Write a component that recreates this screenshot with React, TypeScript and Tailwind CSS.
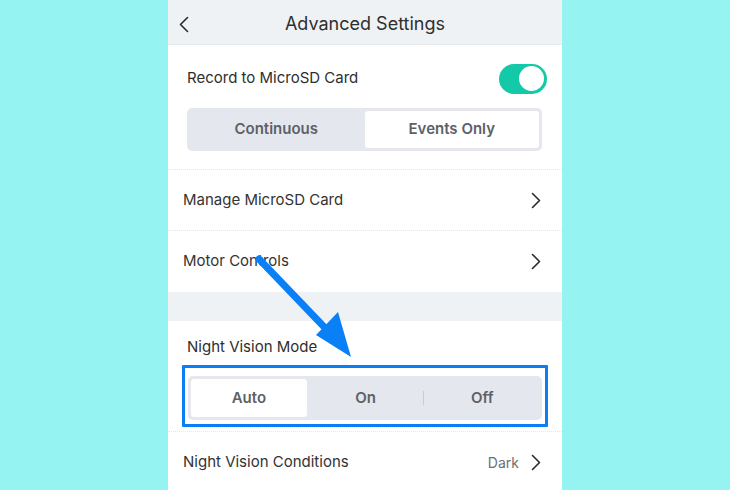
import type { ReactNode } from 'react'

const font = { fontFamily: 'Inter, "Noto Sans", sans-serif' }

// Тонкая стрелка-шеврон для строк списка
const Chevron = ({ dir = 'right' }: { dir?: 'left' | 'right' }) => (
  <svg width="10" height="17" viewBox="0 0 10 17" fill="none">
    <path
      d={dir === 'right' ? 'M1.5 1.5 L8.5 8.5 L1.5 15.5' : 'M8.5 1.5 L1.5 8.5 L8.5 15.5'}
      stroke="#2b2b2b"
      strokeWidth="1.6"
      strokeLinecap="round"
      strokeLinejoin="round"
    />
  </svg>
)

const NavRow = ({ label, value, last }: { label: string; value?: string; last?: boolean }) => (
  <div
    className={`flex h-[61px] shrink-0 items-center justify-between pl-[15px] pr-[21px] ${
      last ? '' : 'border-b border-dotted border-[#e3e7ea]'
    }`}
  >
    <span className="text-[15px] text-[#333]">{label}</span>
    <div className="flex items-center gap-[12px]">
      {value && <span className="text-[14px] text-[#6b6f73]">{value}</span>}
      <Chevron />
    </div>
  </div>
)

const Segment = ({ active, children }: { active?: boolean; children: ReactNode }) => (
  <div
    className={`flex flex-1 items-center justify-center text-[15px] font-semibold text-[#5d6166] ${
      active ? 'rounded-[4px] border border-[#e6e8ec] bg-white' : ''
    }`}
  >
    {children}
  </div>
)

export default function App() {
  return (
    <div className="relative flex h-[490px] w-[730px] justify-center bg-[#95f4f2]" style={font}>
      <div className="flex w-[394px] flex-col overflow-hidden bg-white">
        {/* шапка */}
        <div className="relative flex h-[45px] shrink-0 items-center justify-center border-b border-dotted border-[#dfe3e6] bg-[#eef2f5]">
          <div className="absolute left-[11px] top-[16px]">
            <Chevron dir="left" />
          </div>
          <span className="mt-[3px] text-[18px] text-[#2e2e2e]">Advanced Settings</span>
        </div>

        {/* запись на карту */}
        <div className="shrink-0 border-b border-dotted border-[#e3e7ea] pb-[18px] pl-[19px] pr-[15px]">
          <div className="flex h-[63px] items-center justify-between pt-[4px]">
            <span className="text-[15px] text-[#2e2e2e]">Record to MicroSD Card</span>
            <div className="flex h-[30px] w-[48px] items-center justify-end rounded-full bg-[#13c9a8] pr-[3px]">
              <div className="h-[25px] w-[25px] rounded-full bg-white" />
            </div>
          </div>
          <div className="mr-[5px] flex h-[43px] rounded-[5px] bg-[#e4e7ee] p-[2px]">
            <Segment>Continuous</Segment>
            <Segment active>Events Only</Segment>
          </div>
        </div>

        <NavRow label="Manage MicroSD Card" />
        <NavRow label="Motor Controls" last />

        <div className="h-[29px] shrink-0 bg-[#eef2f5]" />

        {/* ночной режим */}
        <div className="flex h-[37px] shrink-0 items-end pl-[19px]">
          <span className="text-[15px] text-[#2e2e2e]">Night Vision Mode</span>
        </div>
        <div className="mx-[14px] mt-[7px] shrink-0 rounded-[1px] border-[3px] border-[#0a7ff5] px-[3px] pb-[4px] pt-[8px]">
          <div className="flex h-[44px] rounded-[5px] bg-[#e4e7ee] p-[2px]">
            <Segment active>Auto</Segment>
            <Segment>On</Segment>
            <div className="my-[13px] w-px bg-[#c9ccd1]" />
            <Segment>Off</Segment>
          </div>
        </div>
        <div className="mt-[4px] shrink-0 border-t border-dotted border-[#e3e7ea]">
          <NavRow label="Night Vision Conditions" value="Dark" last />
        </div>
      </div>

      {/* указатель */}
      <svg className="pointer-events-none absolute left-0 top-0" width="730" height="490">
        <line x1="259" y1="259" x2="328" y2="331" stroke="#0a80f7" strokeWidth="7" strokeLinecap="round" />
        <polygon points="351,357 316,335 338,312" fill="#0a80f7" />
      </svg>
    </div>
  )
}
